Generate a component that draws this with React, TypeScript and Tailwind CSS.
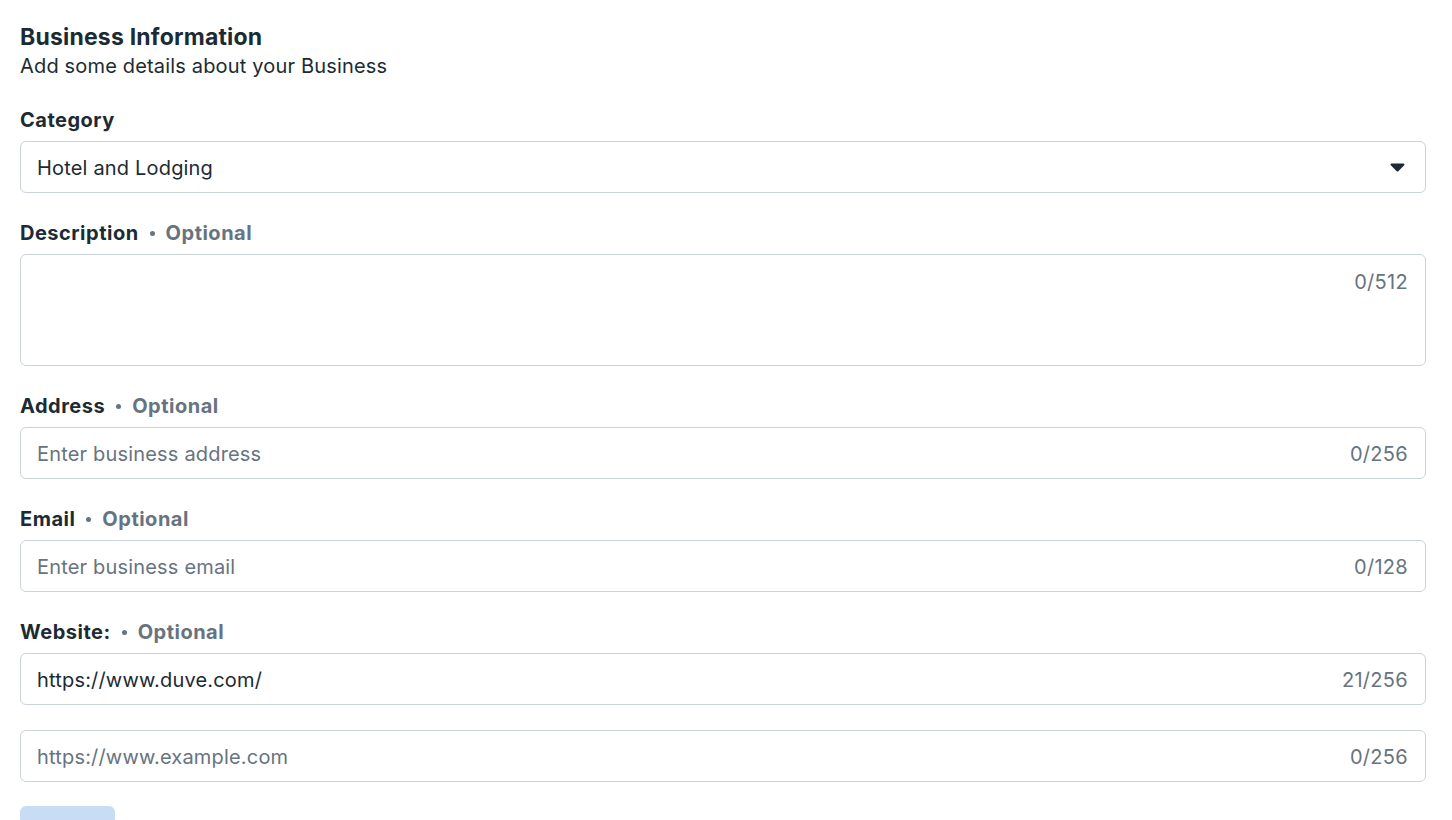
import React from 'react'

const font = { fontFamily: 'Inter, "Noto Sans", sans-serif' }

function Caret() {
  return (
    <svg width="15" height="9" viewBox="0 0 15 9" className="shrink-0">
      <path d="M1.6 0.5h11.8c1 0 1.5 1.1 0.8 1.8l-5.9 6c-0.4 0.4-1.1 0.4-1.6 0l-5.9-6c-0.7-0.7-0.2-1.8 0.8-1.8z" fill="#1c2b33" />
    </svg>
  )
}

function Label({ text, optional }: { text: string; optional?: boolean }) {
  return (
    <div className="mb-[9px] flex h-6 items-center text-[20px] font-bold leading-6 tracking-[0.5px] text-[#1c2b33]">
      {text}
      {optional && (
        <span className="flex items-center text-[#67737f]">
          <span className="mx-[11px] inline-block h-[5px] w-[5px] rounded-full bg-[#67737f]" />
          Optional
        </span>
      )}
    </div>
  )
}

function TextInput({ value, placeholder, count }: { value?: string; placeholder?: string; count: string }) {
  return (
    <div className="flex h-[52px] items-center rounded-[6px] border border-[#cbd2d9] bg-white pl-4 pr-[17px] pt-[1px]">
      <div className={`flex-1 text-[20px] tracking-[0.18px] ${value ? 'text-[#1c2b33]' : 'text-[#67737f]'}`}>
        {value || placeholder}
      </div>
      <div className="text-[20px] tracking-[0.3px] text-[#67737f]">{count}</div>
    </div>
  )
}

export default function App() {
  return (
    <div className="min-h-screen bg-white pl-5 pr-[26px] pt-[23px]" style={font}>
      <div className="text-[23px] font-bold leading-7 tracking-[0.2px] text-[#1c2b33]">Business Information</div>
      <div className="mt-[3px] text-[20px] leading-6 tracking-[0.17px] text-[#1c2b33]">Add some details about your Business</div>

      <div className="mt-[30px] flex flex-col gap-[28px]">
        <div>
          <Label text="Category" />
          <div className="flex h-[52px] items-center rounded-[6px] border border-[#cbd2d9] bg-white pl-4 pr-[20px] pt-[1px]">
            <div className="flex-1 text-[20px] tracking-[0.18px] text-[#1c2b33]">Hotel and Lodging</div>
            <Caret />
          </div>
        </div>

        <div>
          <Label text="Description" optional />
          <div className="flex h-[112px] items-start justify-end rounded-[6px] border border-[#cbd2d9] bg-white pr-[17px] pt-[15px]">
            <div className="text-[20px] leading-6 tracking-[0.3px] text-[#67737f]">0/512</div>
          </div>
        </div>

        <div>
          <Label text="Address" optional />
          <TextInput placeholder="Enter business address" count="0/256" />
        </div>

        <div>
          <Label text="Email" optional />
          <TextInput placeholder="Enter business email" count="0/128" />
        </div>

        <div>
          <Label text="Website:" optional />
          <TextInput value="https://www.duve.com/" count="21/256" />
          <div className="mt-[25px]">
            <TextInput placeholder="https://www.example.com" count="0/256" />
          </div>
        </div>
      </div>

      <button className="mt-[24px] h-10 w-[95px] rounded-[6px] bg-[#c8dcf5]" />
    </div>
  )
}
